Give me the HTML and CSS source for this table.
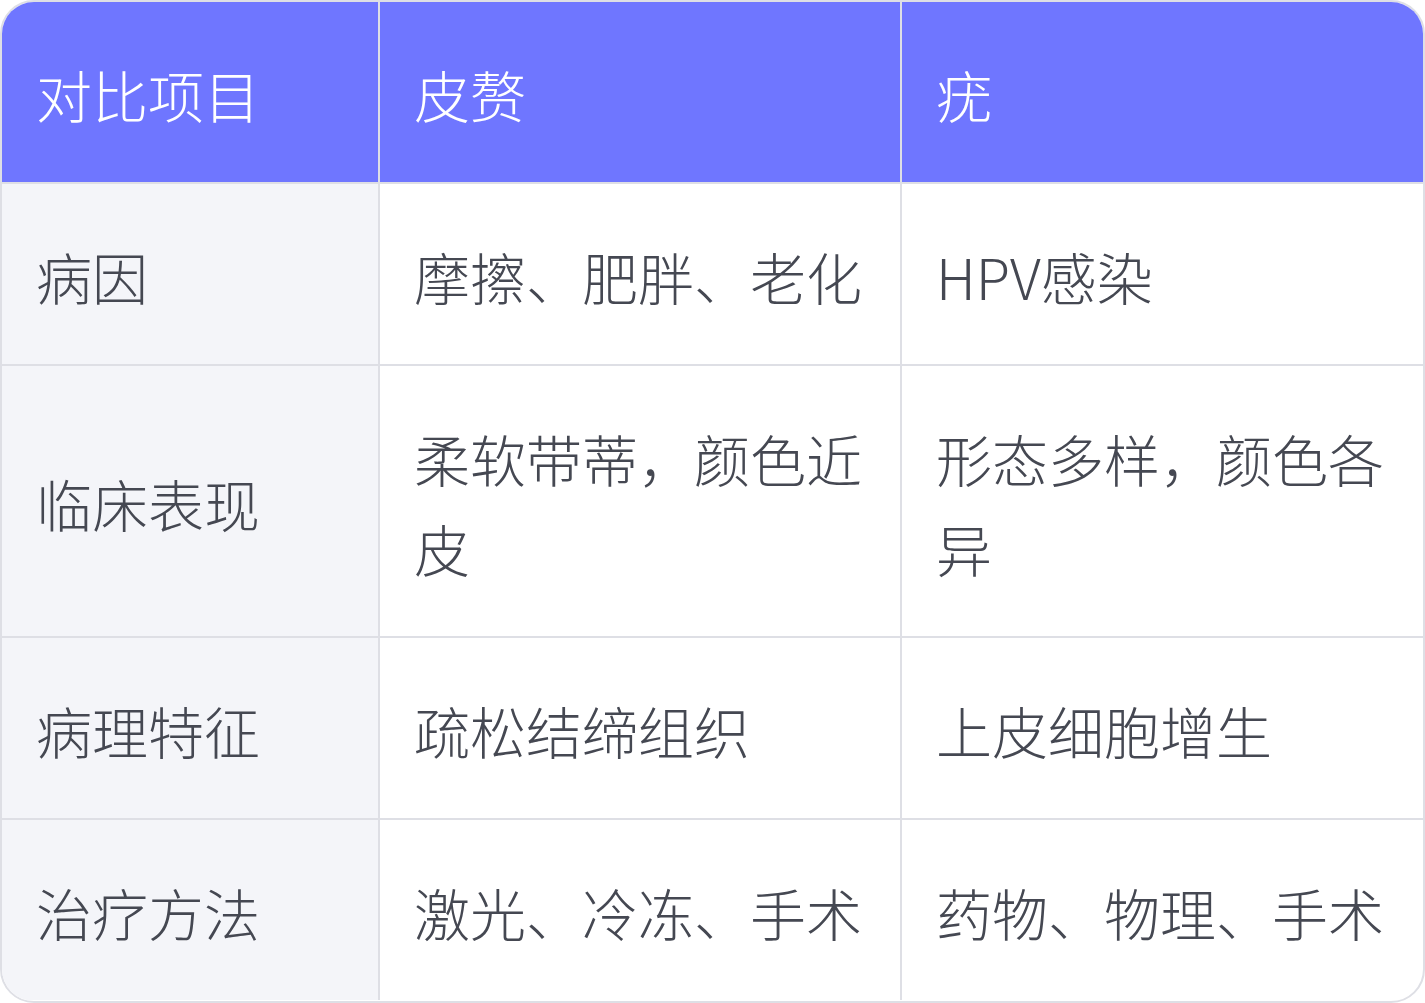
FILE: index.html
```html
<!DOCTYPE html>
<html lang="zh">
<head>
<meta charset="utf-8">
<link rel="stylesheet" href="styles.css">
</head>
<body>
<div class="card">
  <table class="cmp">
    <colgroup>
      <col class="c1">
      <col class="c2">
      <col class="c3">
    </colgroup>
    <thead>
      <tr><th>对比项目</th><th>皮赘</th><th>疣</th></tr>
    </thead>
    <tbody>
      <tr><td class="label">病因</td><td>摩擦、肥胖、老化</td><td>HPV感染</td></tr>
      <tr><td class="label">临床表现</td><td>柔软带蒂，颜色近皮</td><td>形态多样，颜色各异</td></tr>
      <tr><td class="label">病理特征</td><td>疏松结缔组织</td><td>上皮细胞增生</td></tr>
      <tr><td class="label">治疗方法</td><td>激光、冷冻、手术</td><td>药物、物理、手术</td></tr>
    </tbody>
  </table>
</div>
</body>
</html>
```

FILE: styles.css
```css
html, body {
  margin: 0;
  padding: 0;
  background: #ffffff;
}
.card {
  width: 1425px;
  height: 1003px;
  box-sizing: border-box;
  border: 2px solid #dedfe5;
  border-radius: 34px;
  overflow: hidden;
  background: #ffffff;
}
.cmp {
  width: 100%;
  border-collapse: separate;
  border-spacing: 0;
  table-layout: fixed;
  font-family: "Noto Sans CJK SC", "Noto Sans", sans-serif;
  font-size: 56px;
  line-height: 90px;
  font-weight: 300;
  color: #454852;
}
.c1 { width: 378px; }
.c2 { width: 522px; }
.c3 { width: auto; }
.cmp th, .cmp td {
  text-align: left;
  vertical-align: middle;
  padding: 47px 30px 43px 34px;
  border-right: 2px solid #dedfe5;
  border-bottom: 2px solid #dedfe5;
  font-weight: 300;
}
.cmp th:last-child, .cmp td:last-child {
  border-right: none;
}
.cmp tbody tr:last-child td {
  border-bottom: none;
}
.cmp th {
  background: #6f76ff;
  color: #ffffff;
}
.cmp td.label {
  background: #f4f5f9;
}
```
